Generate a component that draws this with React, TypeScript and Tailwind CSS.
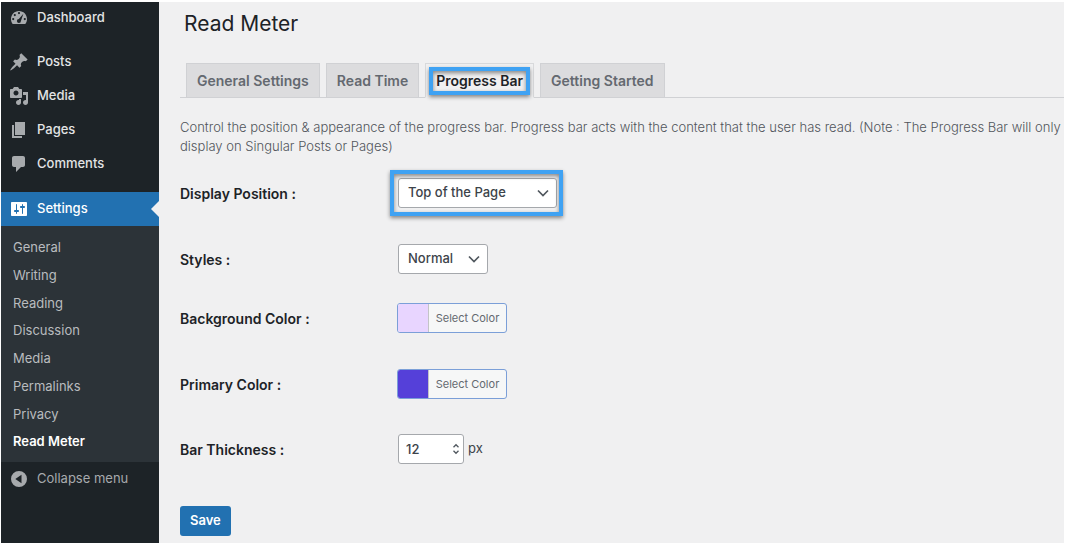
import { useState } from "react";
import type { ReactNode } from "react";
import { clsx } from "clsx";

const icons = {
  dashboard:
    "M3.76 16h12.48c1.12-1.37 1.76-3.11 1.76-5 0-4.42-3.58-8-8-8s-8 3.58-8 8c0 1.89.64 3.63 1.76 5zM10 4a1.1 1.1 0 1 1 0 2.2 1.1 1.1 0 0 1 0-2.2zM5.8 6a1.1 1.1 0 1 1 0 2.2 1.1 1.1 0 0 1 0-2.2zM14.4 5.8l-2.5 7.1a2 2 0 1 1-2.1-1.9zM4.2 10a1.1 1.1 0 1 1 0 2.2 1.1 1.1 0 0 1 0-2.2zM15.8 10a1.1 1.1 0 1 1 0 2.2 1.1 1.1 0 0 1 0-2.2z",
  posts:
    "M10.44 3.02l1.82-1.82 6.36 6.35-1.83 1.82c-1.05-.68-2.48-.57-3.41.36l-.75.75c-.92.93-1.04 2.35-.35 3.41l-1.83 1.82-2.41-2.41-2.8 2.79c-.42.42-3.38 2.71-3.8 2.29s1.86-3.39 2.28-3.81l2.79-2.79L4.1 9.36l1.83-1.82c1.05.69 2.48.57 3.4-.36l.75-.75c.93-.92 1.05-2.35.36-3.41z",
  media:
    "M13 11V4c0-.55-.45-1-1-1h-1.67L9 1H5L3.67 3H2c-.55 0-1 .45-1 1v7c0 .55.45 1 1 1h10c.55 0 1-.45 1-1zM7 4.5c1.38 0 2.5 1.12 2.5 2.5S8.38 9.5 7 9.5 4.5 8.38 4.5 7 5.62 4.5 7 4.5zM14 6h5v10.5c0 1.38-1.12 2.5-2.5 2.5S14 17.88 14 16.5s1.12-2.5 2.5-2.5c.17 0 .34.02.5.05V9h-3V6zm-4 8.05V13h2v3.5c0 1.38-1.12 2.5-2.5 2.5S7 17.88 7 16.5 8.12 14 9.5 14c.17 0 .34.02.5.05z",
  pages: "M6 15V2h10v13H6zm-1 1h8v2H3V5h2v11z",
  comments: "M5 2h9c1.1 0 2 .9 2 2v7c0 1.1-.9 2-2 2h-2l-5 5v-5H5c-1.1 0-2-.9-2-2V4c0-1.1.9-2 2-2z",
  settings:
    "M18 16V4c0-.55-.45-1-1-1H3c-.55 0-1 .45-1 1v12c0 .55.45 1 1 1h14c.55 0 1-.45 1-1zM8 11h1c.55 0 1 .45 1 1s-.45 1-1 1H8v1.5c0 .28-.22.5-.5.5s-.5-.22-.5-.5V13H6c-.55 0-1-.45-1-1s.45-1 1-1h1V5.5c0-.28.22-.5.5-.5s.5.22.5.5V11zm5-2h-1c-.55 0-1-.45-1-1s.45-1 1-1h1V5.5c0-.28.22-.5.5-.5s.5.22.5.5V7h1c.55 0 1 .45 1 1s-.45 1-1 1h-1v5.5c0 .28-.22.5-.5.5s-.5-.22-.5-.5V9z",
  collapse: "M10 2a8 8 0 1 0 0 16 8 8 0 0 0 0-16zM12.5 5.8v8.4L6.3 10z",
};

type IconName = keyof typeof icons;

const menu: { label: string; icon: IconName }[] = [
  { label: "Posts", icon: "posts" },
  { label: "Media", icon: "media" },
  { label: "Pages", icon: "pages" },
  { label: "Comments", icon: "comments" },
];

const submenu = ["General", "Writing", "Reading", "Discussion", "Media", "Permalinks", "Privacy", "Read Meter"];

const tabs = ["General Settings", "Read Time", "Progress Bar", "Getting Started"];

function Icon({ name, className }: { name: IconName; className?: string }) {
  return (
    <svg viewBox="0 0 20 20" className={clsx("size-5 shrink-0 fill-current", className)} aria-hidden="true">
      <path fillRule="evenodd" d={icons[name]} />
    </svg>
  );
}

function Chevron() {
  return (
    <svg
      viewBox="0 0 12 12"
      className="pointer-events-none absolute top-1/2 right-2 size-3 -translate-y-1/2 fill-none stroke-[#50575e]"
      aria-hidden="true"
    >
      <path d="M1 3.5 6 8.5l5-5" strokeWidth="1.7" />
    </svg>
  );
}

function MenuLink({ label, icon }: { label: string; icon: IconName }) {
  return (
    <a href="#" className="flex h-[34px] items-center gap-2 pl-2 font-medium text-[#e3e4e5]">
      <Icon name={icon} className="text-[#a7aaad]" />
      {label}
    </a>
  );
}

function Sidebar() {
  return (
    <nav className="w-[158px] shrink-0 bg-[#1d2327] text-[13px]">
      <a href="#" className="flex h-8 items-center gap-2 pl-2 font-medium text-[#e3e4e5]">
        <Icon name="dashboard" className="text-[#a7aaad]" />
        Dashboard
      </a>
      <div className="mt-[11px] mb-[11px]">
        {menu.map((item) => (
          <MenuLink key={item.label} {...item} />
        ))}
      </div>
      <a href="#" className="relative flex h-[34px] items-center gap-2 bg-[#2271b1] pl-2 font-medium text-white">
        <Icon name="settings" />
        Settings
        <span className="absolute top-1/2 right-0 -translate-y-1/2 border-8 border-l-0 border-transparent border-r-[#f0f0f1]" />
      </a>
      <div className="bg-[#2c3338] pt-2 pb-1.5">
        <ul className="grid h-[222px] auto-rows-fr">
          {submenu.map((item) => (
            <li key={item} className="flex items-center pl-3">
              <a
                href="#"
                className={clsx(item === "Read Meter" ? "font-semibold text-white" : "text-[#b9bcbf]")}
              >
                {item}
              </a>
            </li>
          ))}
        </ul>
      </div>
      <button type="button" className="flex h-[34px] items-center gap-2 pl-2 text-[#a7aaad]">
        <Icon name="collapse" />
        Collapse menu
      </button>
    </nav>
  );
}

function Highlight({ className }: { className: string }) {
  return (
    <span
      className={clsx(
        "pointer-events-none absolute border-4 border-[#3fa2f3] shadow-[0_2px_4px_rgba(0,0,0,0.45),inset_0_2px_4px_rgba(0,0,0,0.45)]",
        className,
      )}
    />
  );
}

function Row({ id, label, className, children }: { id: string; label: string; className?: string; children: ReactNode }) {
  return (
    <div className={clsx("flex items-center", className)}>
      <label htmlFor={id} className="w-[218px] shrink-0 text-[14px] font-semibold text-[#1d2327]">
        {label}
      </label>
      {children}
    </div>
  );
}

function Select({ id, value, options, className }: { id: string; value: string; options: string[]; className: string }) {
  return (
    <>
      <select
        id={id}
        defaultValue={value}
        className={clsx(
          "h-[30px] appearance-none rounded-[3px] border border-[#a5a8ac] bg-white pl-[9px] text-[13px] font-medium text-[#3c434a]",
          className,
        )}
      >
        {options.map((option) => (
          <option key={option}>{option}</option>
        ))}
      </select>
      <Chevron />
    </>
  );
}

function ColorButton({ id, swatch }: { id: string; swatch: string }) {
  return (
    <button
      id={id}
      type="button"
      className="-ml-px flex h-[30px] w-[110px] overflow-hidden rounded-[3px] border border-[#7b9fd8] bg-[#f6f7f7] text-[11px] leading-7 text-[#646970]"
    >
      <span className={clsx("w-[30px] shrink-0 self-stretch", swatch)} />
      <span className="flex-1 border-l border-[#c3c4c7] text-center">Select Color</span>
    </button>
  );
}

export default function App() {
  const [active, setActive] = useState("Progress Bar");
  const [thickness, setThickness] = useState(12);

  return (
    <div className="flex min-h-screen bg-white pt-0.5 pr-0.5 pl-px font-['Inter','Liberation_Sans',sans-serif]">
      <Sidebar />
      <main className="min-w-0 flex-1 bg-[#f0f0f1] pl-[21px]">
        <h1 className="pt-2 pl-1 text-[21px] leading-7 text-[#1d2327]">Read Meter</h1>

        <div className="mt-[25px] flex gap-1.5 border-b border-[#d0d1d4] pl-1.5">
          {tabs.map((tab) => (
            <button
              key={tab}
              type="button"
              onClick={() => setActive(tab)}
              className={clsx(
                "relative -mb-px h-[35px] border px-2.5 text-[14px] font-semibold whitespace-nowrap",
                tab === active
                  ? "border-[#d8d9db] border-b-[#f0f0f1] bg-[#f0f0f1] text-[#1d2327]"
                  : "border-[#d0d1d4] bg-[#dcdcde] text-[#646970]",
              )}
            >
              {tab}
              {tab === active && <Highlight className="inset-x-[3px] top-[3px] bottom-[2px]" />}
            </button>
          ))}
        </div>

        <p className="mt-5 text-[13px] leading-[19px] font-light text-[#50555b]">
          Control the position &amp; appearance of the progress bar. Progress bar acts with the content that the user has
          read. (Note : The Progress Bar will only display on Singular Posts or Pages)
        </p>

        <form className="mt-[22px] pb-2" onSubmit={(e) => e.preventDefault()}>
          <Row id="position" label="Display Position :" className="mb-9">
            <div className="relative">
              <Select
                id="position"
                value="Top of the Page"
                options={["None", "Top of the Page", "Bottom of the Page"]}
                className="w-[159px]"
              />
              <Highlight className="-inset-y-2 -right-1.5 -left-2" />
            </div>
          </Row>
          <Row id="styles" label="Styles :" className="mb-[29px]">
            <div className="relative">
              <Select id="styles" value="Normal" options={["Normal", "Gradient"]} className="w-[90px]" />
            </div>
          </Row>
          <Row id="background" label="Background Color :" className="mb-9">
            <ColorButton id="background" swatch="bg-[#e8d5ff]" />
          </Row>
          <Row id="primary" label="Primary Color :" className="mb-[35px]">
            <ColorButton id="primary" swatch="bg-[#5540d9]" />
          </Row>
          <Row id="thickness" label="Bar Thickness :">
            <div className="relative">
              <input
                id="thickness"
                type="number"
                value={thickness}
                onChange={(e) => setThickness(Number(e.target.value))}
                className="block h-[30px] w-[66px] appearance-none rounded-[3px] border border-[#a5a8ac] bg-white px-[7px] text-[13px] font-medium text-[#3c434a] [&::-webkit-inner-spin-button]:appearance-none"
              />
              <svg
                viewBox="0 0 8 14"
                className="pointer-events-none absolute top-2 right-1 h-3.5 w-2 fill-none stroke-[#50575e]"
                aria-hidden="true"
              >
                <path d="M1.5 5.2 4 2.7l2.5 2.5M1.5 8.8 4 11.3l2.5-2.5" strokeWidth="1.3" />
              </svg>
            </div>
            <span className="ml-1 text-[13px] text-[#3c434a]">px</span>
          </Row>
          <button
            type="submit"
            className="mt-[42px] h-[30px] rounded-[3px] bg-[#2271b1] px-2.5 text-[13px] font-semibold text-white"
          >
            Save
          </button>
        </form>
      </main>
    </div>
  );
}
